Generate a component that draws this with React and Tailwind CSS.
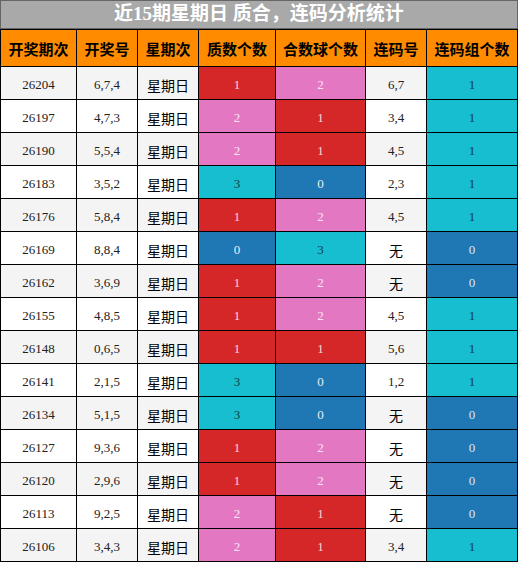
const rows = [
  ['26204', '6,7,4', 1, 2, '6,7', 1],
  ['26197', '4,7,3', 2, 1, '3,4', 1],
  ['26190', '5,5,4', 2, 1, '4,5', 1],
  ['26183', '3,5,2', 3, 0, '2,3', 1],
  ['26176', '5,8,4', 1, 2, '4,5', 1],
  ['26169', '8,8,4', 0, 3, '无', 0],
  ['26162', '3,6,9', 1, 2, '无', 0],
  ['26155', '4,8,5', 1, 2, '4,5', 1],
  ['26148', '0,6,5', 1, 1, '5,6', 1],
  ['26141', '2,1,5', 3, 0, '1,2', 1],
  ['26134', '5,1,5', 3, 0, '无', 0],
  ['26127', '9,3,6', 1, 2, '无', 0],
  ['26120', '2,9,6', 1, 2, '无', 0],
  ['26113', '9,2,5', 2, 1, '无', 0],
  ['26106', '3,4,3', 2, 1, '3,4', 1],
];

// colour by value, same palette for all count columns
const cellColor = {
  0: 'bg-[#1f77b4] text-[#e8eef5]',
  1: 'bg-[#d62728] text-[#f3d6d6]',
  2: 'bg-[#e377c2] text-[#fbe4f3]',
  3: 'bg-[#17becf] text-[#0d3f45]',
};
const groupColor = {
  0: 'bg-[#1f77b4] text-[#dce8f2]',
  1: 'bg-[#17becf] text-[#0d3f45]',
};

const headers = ['开奖期次', '开奖号', '星期次', '质数个数', '合数球个数', '连码号', '连码组个数'];
const widths = ['w-[76px]', 'w-[61px]', 'w-[61px]', 'w-[77px]', 'w-[90px]', 'w-[61px]', 'w-[91px]'];

const serif = "font-['Liberation_Serif',serif]";
const cjk = "font-['Noto_Sans_CJK_SC',sans-serif]";

export default function App() {
  return (
    <div className="w-[518px] h-[562px] bg-white overflow-hidden">
      <div className={`h-[29px] bg-[#a9a9a9] border border-[#666] flex items-center justify-center text-white font-bold text-[19px] font-['Liberation_Serif','Noto_Sans_CJK_SC',serif]`}>
        近15期星期日 质合，连码分析统计
      </div>
      <table className="w-[518px] border-collapse table-fixed">
        <colgroup>
          {widths.map((w, i) => <col key={i} className={w} />)}
        </colgroup>
        <thead>
          <tr className="h-[37px] bg-[#ff8c00]">
            {headers.map(h => (
              <th key={h} className={`border border-black text-[15px] font-bold text-black p-0 pt-[2px] ${cjk}`}>{h}</th>
            ))}
          </tr>
        </thead>
        <tbody>
          {rows.map((r, i) => {
            const bg = i % 2 === 0 ? 'bg-[#f4f4f4]' : 'bg-white';
            return (
              <tr key={r[0]} className="h-[33px]">
                <td className={`border border-black text-center text-[13px] text-[#222] p-0 pt-[3px] ${bg} ${serif}`}>{r[0]}</td>
                <td className={`border border-black text-center text-[13px] text-[#222] p-0 pt-[3px] ${bg} ${serif}`}>{r[1]}</td>
                <td className={`border border-black text-center text-[14px] text-black p-0 pt-[4px] ${bg} ${cjk}`}>星期日</td>
                <td className={`border border-black text-center text-[13px] p-0 pt-[3px] ${cellColor[r[2]]} ${serif}`}>{r[2]}</td>
                <td className={`border border-black text-center text-[13px] p-0 pt-[3px] ${cellColor[r[3]]} ${serif}`}>{r[3]}</td>
                {r[4] === '无' ? (
                  <td className={`border border-black text-center text-[14px] text-black p-0 pt-[4px] ${bg} ${cjk}`}>无</td>
                ) : (
                  <td className={`border border-black text-center text-[13px] text-[#222] p-0 pt-[3px] ${bg} ${serif}`}>{r[4]}</td>
                )}
                <td className={`border border-black text-center text-[13px] p-0 pt-[3px] ${groupColor[r[5]]} ${serif}`}>{r[5]}</td>
              </tr>
            );
          })}
        </tbody>
      </table>
    </div>
  );
}
